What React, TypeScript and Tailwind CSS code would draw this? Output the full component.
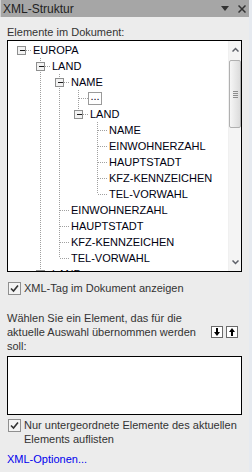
import React from "react";

type TreeRow = {
  d: number;
  label: string;
  exp?: boolean;
  next?: boolean;
  lines: number[];
  boxed?: boolean;
};

const rows: TreeRow[] = [
  { d: 0, label: "EUROPA", exp: true, lines: [] },
  { d: 1, label: "LAND", exp: true, next: true, lines: [] },
  { d: 2, label: "NAME", exp: true, next: true, lines: [1] },
  { d: 3, label: "...", boxed: true, next: true, lines: [1, 2] },
  { d: 3, label: "LAND", exp: true, lines: [1, 2] },
  { d: 4, label: "NAME", next: true, lines: [1, 2] },
  { d: 4, label: "EINWOHNERZAHL", next: true, lines: [1, 2] },
  { d: 4, label: "HAUPTSTADT", next: true, lines: [1, 2] },
  { d: 4, label: "KFZ-KENNZEICHEN", next: true, lines: [1, 2] },
  { d: 4, label: "TEL-VORWAHL", lines: [1, 2] },
  { d: 2, label: "EINWOHNERZAHL", next: true, lines: [1] },
  { d: 2, label: "HAUPTSTADT", next: true, lines: [1] },
  { d: 2, label: "KFZ-KENNZEICHEN", next: true, lines: [1] },
  { d: 2, label: "TEL-VORWAHL", lines: [1] },
  { d: 1, label: "LAND", exp: true, next: true, lines: [] },
];

const COL = 19;
const DOT = "#a0a0a0";

function Gutter({ row }: { row: TreeRow }) {
  const w = (row.d + 1) * COL;
  const cx = row.d * COL + 9.5;
  return (
    <svg width={w} height={16} className="shrink-0" shapeRendering="crispEdges">
      {row.lines.map((k) => (
        <line key={k} x1={k * COL + 9.5} y1={0} x2={k * COL + 9.5} y2={16} stroke={DOT} strokeDasharray="1 1" />
      ))}
      {row.d > 0 && (
        <line x1={cx} y1={0} x2={cx} y2={row.next ? 16 : 8} stroke={DOT} strokeDasharray="1 1" />
      )}
      <line x1={cx} y1={8.5} x2={w} y2={8.5} stroke={DOT} strokeDasharray="1 1" />
      {row.exp && (
        <g>
          <rect x={cx - 4} y={4.5} width={8} height={8} fill="#f2f2f2" stroke="#8e8f8f" />
          <line x1={cx - 2} y1={8.5} x2={cx + 3} y2={8.5} stroke="#1a1a1a" />
        </g>
      )}
    </svg>
  );
}

function Checkbox() {
  return (
    <span className="flex h-[13px] w-[13px] shrink-0 items-center justify-center border border-[#8f8f8f] bg-[#f4f4f4]">
      <svg width="9" height="9" viewBox="0 0 9 9">
        <path d="M1 4.5 L3.5 7 L8 1.5" fill="none" stroke="#333" strokeWidth="1.6" />
      </svg>
    </span>
  );
}

export default function App() {
  return (
    <div
      className="flex h-[472px] w-[252px] flex-col overflow-hidden border-r-[3px] border-[#e6eaf0] bg-[#ececec] text-[11px] text-[#333]"
      style={{ fontFamily: '"Liberation Sans", Arial, sans-serif' }}
    >
      <div className="flex h-[17px] shrink-0 items-center justify-between border-l border-[#d0d0d0] bg-[#a6a6a6] pl-[2px] pr-[3px]">
        <span className="text-[12px] text-[#222]">XML-Struktur</span>
        <div className="flex items-center gap-[9px]">
          <svg width="8" height="5" viewBox="0 0 8 5">
            <path d="M0 0 H8 L4 5 Z" fill="#333" />
          </svg>
          <svg width="8" height="8" viewBox="0 0 8 8">
            <path d="M0.5 0.5 L7.5 7.5 M7.5 0.5 L0.5 7.5" stroke="#333" strokeWidth="1.5" />
          </svg>
        </div>
      </div>

      <div className="flex flex-col px-[7px]">
        <p className="mt-[8px] h-[15px] leading-[15px]">Elemente im Dokument:</p>

        <div className="flex h-[232px] overflow-hidden border border-black bg-white">
          <div
            className="min-w-0 flex-1 overflow-hidden pl-[4px] pt-[1px] text-[11px] text-[#000010]"
            style={{ fontFamily: '"Liberation Sans Narrow", "Liberation Sans", sans-serif' }}
          >
            {rows.map((r, i) => (
              <div key={i} className="flex h-4 items-center">
                <Gutter row={r} />
                {r.boxed ? (
                  <span className="flex h-[13px] w-[14px] items-center justify-center border border-[#9a9a9a] pb-[3px] leading-none">
                    ...
                  </span>
                ) : (
                  <span className="pl-[2px] leading-none">{r.label}</span>
                )}
              </div>
            ))}
          </div>
          <div className="flex w-[13px] shrink-0 flex-col items-center border-l border-[#f0f0f0] bg-[#f4f4f4]">
            <div className="flex h-[17px] items-center justify-center">
              <svg width="7" height="5" viewBox="0 0 7 5">
                <path d="M0.5 4.5 L3.5 1.5 L6.5 4.5" fill="none" stroke="#5d6068" strokeWidth="1.5" />
              </svg>
            </div>
            <div className="mt-[2px] flex h-[68px] w-[12px] flex-col items-center justify-center gap-[1px] rounded-[2px] border border-[#b0b0b0] bg-gradient-to-r from-[#f6f6f6] to-[#dcdcdc]">
              <span className="h-px w-[5px] bg-[#8c8c8c]" />
              <span className="h-px w-[5px] bg-[#8c8c8c]" />
              <span className="h-px w-[5px] bg-[#8c8c8c]" />
              <span className="h-px w-[5px] bg-[#8c8c8c]" />
            </div>
            <div className="flex-1" />
            <div className="flex h-[17px] items-center justify-center pb-[1px]">
              <svg width="7" height="5" viewBox="0 0 7 5">
                <path d="M0.5 0.5 L3.5 3.5 L6.5 0.5" fill="none" stroke="#5d6068" strokeWidth="1.5" />
              </svg>
            </div>
          </div>
        </div>

        <label className="mt-[9px] flex h-[14px] items-center gap-[3px] pl-px">
          <Checkbox />
          <span>XML-Tag im Dokument anzeigen</span>
        </label>

        <div className="mt-[16px] flex items-center justify-between">
          <p className="leading-[14px]">
            Wählen Sie ein Element, das für die
            <br />
            aktuelle Auswahl übernommen werden
            <br />
            soll:
          </p>
          <div className="mr-[4px] flex gap-[3px]">
            <span className="flex h-[12px] w-[12px] items-center justify-center border border-[#6a6a6a] bg-white">
              <svg width="8" height="8" viewBox="0 0 8 8">
                <path d="M3 0 H5 V4 H7 L4 8 L1 4 H3 Z" fill="#000" />
              </svg>
            </span>
            <span className="flex h-[12px] w-[12px] items-center justify-center border border-[#6a6a6a] bg-white">
              <svg width="8" height="8" viewBox="0 0 8 8">
                <path d="M3 8 H5 V4 H7 L4 0 L1 4 H3 Z" fill="#000" />
              </svg>
            </span>
          </div>
        </div>

        <div className="mt-[3px] h-[59px] border border-black bg-white" />

        <label className="mt-[3px] flex items-start gap-[3px] pl-px">
          <span className="mt-px">
            <Checkbox />
          </span>
          <span className="leading-[14px]">
            Nur untergeordnete Elemente des aktuellen
            <br />
            Elements auflisten
          </span>
        </label>

        <a className="mt-[6px] leading-[14px] text-[#0000ee]">XML-Optionen...</a>
      </div>
    </div>
  );
}
